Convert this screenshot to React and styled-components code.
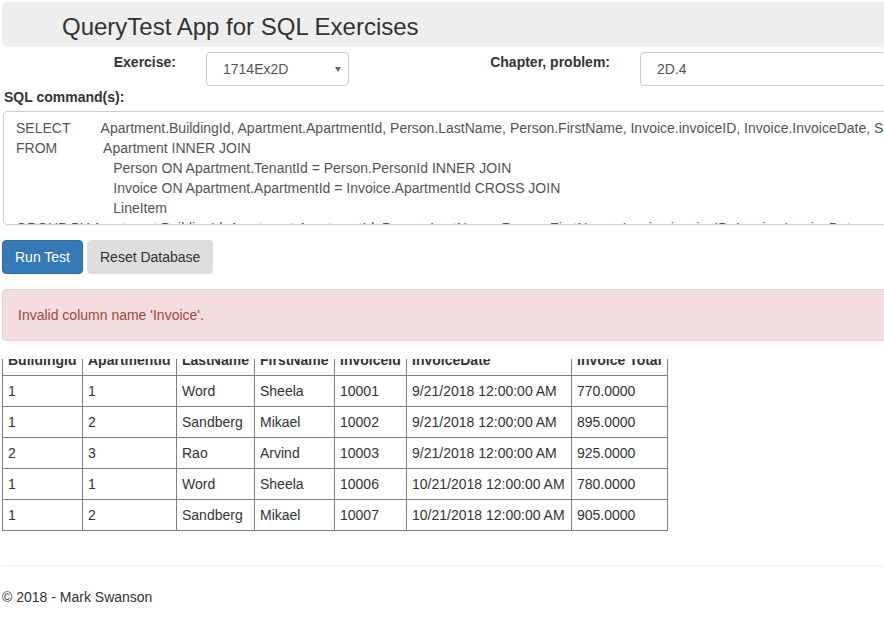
import React, { useLayoutEffect, useRef } from 'react';
import styled, { createGlobalStyle, css } from 'styled-components';

const GlobalStyle = createGlobalStyle`
  html, body {
    margin: 0;
    overflow: hidden;
    background: #fff;
  }
  body {
    font-family: "Liberation Sans", Arial, Helvetica, sans-serif;
    font-size: 14px;
    line-height: 1.42857;
    color: #333;
  }
  * {
    box-sizing: border-box;
  }
`;

const Page = styled.div`
  width: 1160px;
  padding: 2px 0 0 2px;
`;

const Banner = styled.div`
  height: 45px;
  padding: 11px 0 0 60px;
  background: #eee;
  border-radius: 6px;
`;

const Title = styled.h1`
  margin: 0;
  font-size: 24px;
  line-height: 28px;
  font-weight: 400;
  color: #333;
`;

const FieldGrid = styled.div`
  display: grid;
  grid-template-columns: 174px 143px 231px 1fr;
  column-gap: 30px;
  align-items: start;
  margin-top: 5px;
`;

const FieldLabel = styled.label`
  font-weight: bold;
  line-height: 20px;
  text-align: right;
`;

const fieldBox = css`
  display: block;
  width: 100%;
  height: 34px;
  padding: 0 16px;
  border: 1px solid #ccc;
  border-radius: 4px;
  background: #fff;
  font-family: inherit;
  font-size: 14px;
  color: #555;
  outline: none;
`;

const SelectWrap = styled.div`
  position: relative;
`;

const Select = styled.select`
  ${fieldBox}
  appearance: none;
`;

const Arrow = styled.svg`
  position: absolute;
  right: 8px;
  top: 15px;
  pointer-events: none;
`;

const TextInput = styled.input`
  ${fieldBox}
`;

const SqlLabel = styled.label`
  display: block;
  margin: 1px 0 4px 2px;
  font-weight: bold;
  line-height: 20px;
`;

const SqlBox = styled.textarea`
  display: block;
  width: calc(100% - 1px);
  height: 114px;
  margin-left: 1px;
  padding: 6px 12px;
  border: 1px solid #ccc;
  border-radius: 4px;
  font-family: inherit;
  font-size: 14px;
  line-height: 20px;
  color: #555;
  white-space: pre;
  overflow: hidden;
  resize: none;
  outline: none;
`;

const ButtonRow = styled.div`
  display: flex;
  gap: 4px;
  margin-top: 15px;
`;

const Button = styled.button`
  height: 34px;
  padding: 6px 12px;
  border: 1px solid ${({ $primary }) => ($primary ? '#2e6da4' : '#ddd')};
  border-radius: 4px;
  background: ${({ $primary }) => ($primary ? '#337ab7' : '#ddd')};
  color: ${({ $primary }) => ($primary ? '#fff' : '#333')};
  font-family: inherit;
  font-size: 14px;
  line-height: 20px;
  cursor: pointer;
`;

const Alert = styled.div`
  margin: 15px 0 18px;
  padding: 15px;
  border: 1px solid #ebccd1;
  border-radius: 4px;
  background: #f2dede;
  color: #a94442;
  line-height: 20px;
`;

const TableScroll = styled.div`
  height: 172px;
  overflow: hidden;
`;

const Table = styled.table`
  border-collapse: collapse;
  color: #333;
`;

const Col = styled.col`
  width: ${({ $w }) => $w}px;
`;

const Th = styled.th`
  padding: 5px;
  border: 1px solid #808080;
  text-align: left;
  font-weight: bold;
  line-height: 20px;
  white-space: nowrap;
`;

const Td = styled.td`
  padding: 5px;
  border: 1px solid #808080;
  line-height: 20px;
  white-space: nowrap;
`;

const Rule = styled.hr`
  margin: 35px 0 20px;
  border: 0;
  border-top: 1px solid #eee;
`;

const Footer = styled.footer`
  p {
    margin: 0;
    line-height: 20px;
  }
`;

const pad = (n) => ' '.repeat(n);

const sql = [
  `SELECT${pad(8)}Apartment.BuildingId, Apartment.ApartmentId, Person.LastName, Person.FirstName, Invoice.invoiceID, Invoice.InvoiceDate, SUM(LineItem.Amount) AS [Invoice Total]`,
  `FROM${pad(12)}Apartment INNER JOIN`,
  `${pad(25)}Person ON Apartment.TenantId = Person.PersonId INNER JOIN`,
  `${pad(25)}Invoice ON Apartment.ApartmentId = Invoice.ApartmentId CROSS JOIN`,
  `${pad(25)}LineItem`,
  `GROUP BY Apartment.BuildingId, Apartment.ApartmentId, Person.LastName, Person.FirstName, Invoice.invoiceID, Invoice.InvoiceDate`,
].join('\n');

const columns = [
  { name: 'BuildingId', width: 80 },
  { name: 'ApartmentId', width: 94 },
  { name: 'LastName', width: 78 },
  { name: 'FirstName', width: 80 },
  { name: 'InvoiceId', width: 72 },
  { name: 'InvoiceDate', width: 165 },
  { name: 'Invoice Total', width: 96 },
];

const rows = [
  ['1', '1', 'Word', 'Sheela', '10001', '9/21/2018 12:00:00 AM', '770.0000'],
  ['1', '2', 'Sandberg', 'Mikael', '10002', '9/21/2018 12:00:00 AM', '895.0000'],
  ['2', '3', 'Rao', 'Arvind', '10003', '9/21/2018 12:00:00 AM', '925.0000'],
  ['1', '1', 'Word', 'Sheela', '10006', '10/21/2018 12:00:00 AM', '780.0000'],
  ['1', '2', 'Sandberg', 'Mikael', '10007', '10/21/2018 12:00:00 AM', '905.0000'],
];

const ResultTable = () => {
  const scrollRef = useRef(null);

  // the results pane is scrolled a little, so the header row is half hidden
  useLayoutEffect(() => {
    if (scrollRef.current) scrollRef.current.scrollTop = 15;
  }, []);

  return (
    <TableScroll ref={scrollRef}>
      <Table>
        <colgroup>
          {columns.map((c) => (
            <Col key={c.name} $w={c.width} />
          ))}
        </colgroup>
        <thead>
          <tr>
            {columns.map((c) => (
              <Th key={c.name}>{c.name}</Th>
            ))}
          </tr>
        </thead>
        <tbody>
          {rows.map((r, i) => (
            <tr key={i}>
              {r.map((v, j) => (
                <Td key={j}>{v}</Td>
              ))}
            </tr>
          ))}
        </tbody>
      </Table>
    </TableScroll>
  );
};

const App = () => {
  return (
    <Page>
      <GlobalStyle />
      <Banner>
        <Title>QueryTest App for SQL Exercises</Title>
      </Banner>

      <FieldGrid>
        <FieldLabel htmlFor="exercise">Exercise:</FieldLabel>
        <SelectWrap>
          <Select id="exercise" defaultValue="1714Ex2D">
            <option value="1714Ex2D">1714Ex2D</option>
          </Select>
          <Arrow width="6" height="5" viewBox="0 0 6 5">
            <path d="M0 0h6L3 5z" fill="#666" />
          </Arrow>
        </SelectWrap>
        <FieldLabel htmlFor="chapter">Chapter, problem:</FieldLabel>
        <TextInput id="chapter" defaultValue="2D.4" />
      </FieldGrid>

      <SqlLabel htmlFor="sql">SQL command(s):</SqlLabel>
      <SqlBox id="sql" defaultValue={sql} spellCheck={false} />

      <ButtonRow>
        <Button $primary>Run Test</Button>
        <Button>Reset Database</Button>
      </ButtonRow>

      <Alert>Invalid column name 'Invoice'.</Alert>

      <ResultTable />

      <Rule />
      <Footer>
        <p>© 2018 - Mark Swanson</p>
      </Footer>
    </Page>
  );
};

export default App;
